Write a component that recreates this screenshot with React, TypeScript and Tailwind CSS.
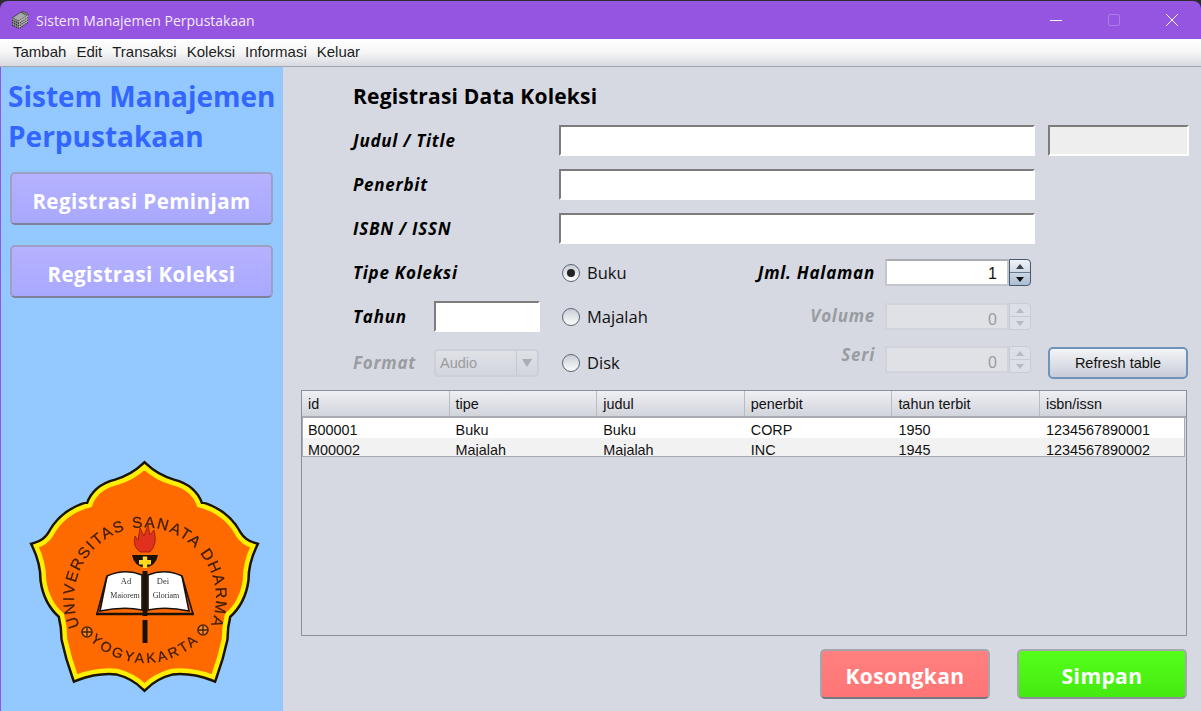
import React from "react";

const LOBE =
  "M124.5 17 Q113 28 96 33 Q76 38 70 55 Q43 62 31 85 Q26 93 16 96 Q24 113 24 130 Q27 152 42 165 Q45 177 45 189 Q49 208 56 227 Q77 219 97 221 Q113 225 124.5 236 Q136 225 152 221 Q172 219 193 227 Q200 208 204 189 Q204 177 207 165 Q222 152 225 130 Q225 113 233 96 Q223 93 218 85 Q206 62 179 55 Q173 38 153 33 Q136 28 124.5 17 Z";

function Flower({ x, y }: { x: number; y: number }) {
  return (
    <g>
      <circle cx={x} cy={y} r="5" fill="#ff8a30" stroke="#4a2500" strokeWidth="1.6" />
      <path d={`M${x - 4} ${y} H${x + 4} M${x} ${y - 4} V${y + 4}`} stroke="#4a2500" strokeWidth="1.4" />
    </g>
  );
}

function Logo() {
  return (
    <svg width="250" height="250" viewBox="0 0 250 250" className="block blur-[0.4px]">
      <defs>
        <path id="arcTop" d="M58 172 A71 71 0 1 1 192 172" fill="none" />
        <path id="arcBottom" d="M60 178 A78 78 0 0 0 190 178" fill="none" />
      </defs>
      <path d={LOBE} fill="#ff6a00" stroke="#1a1400" strokeWidth="9.5" strokeLinejoin="miter" strokeMiterlimit="12" />
      <path d={LOBE} fill="#ff6a00" stroke="#fff000" strokeWidth="4.5" strokeLinejoin="miter" strokeMiterlimit="12" />
      <text fontFamily="'Liberation Sans', sans-serif" fontSize="15.5" fill="#3a1c00" stroke="#3a1c00" strokeWidth="0.25">
        <textPath href="#arcTop" startOffset="50%" textAnchor="middle" letterSpacing="1.7">
          UNIVERSITAS SANATA DHARMA
        </textPath>
      </text>
      <text fontFamily="'Liberation Sans', sans-serif" fontSize="14" fill="#3a1c00" stroke="#3a1c00" strokeWidth="0.25">
        <textPath href="#arcBottom" startOffset="50%" textAnchor="middle" letterSpacing="2.8">
          YOGYAKARTA
        </textPath>
      </text>
      <Flower x={67} y={182} />
      <Flower x={183} y={180} />
      <path d="M120 102 Q112 96 115 86 L118 90 L120 78 L124 86 L128 75 L130 85 L134 80 Q138 94 130 102 Z" fill="#e0301e" stroke="#8a2010" strokeWidth="0.8" />
      <path d="M112 105 H138 Q136 116 125 118 Q114 116 112 105 Z" fill="#1a1208" />
      <path d="M122.8 106.5 h4.4 v3.5 h3.8 v4.4 h-3.8 v3.6 h-4.4 v-3.6 h-3.8 v-4.4 h3.8 Z" fill="#ffd820" />
      <path d="M87 126 Q105 118 122 125 V160 Q104 156 80 161 Z" fill="#ffffff" stroke="#1a1208" strokeWidth="1.6" />
      <path d="M128 125 Q145 118 162 126 L169 161 Q146 156 128 160 Z" fill="#ffffff" stroke="#1a1208" strokeWidth="1.6" />
      <path d="M87 126 L77 164 H173 L162 126" fill="none" stroke="#1a1208" strokeWidth="1.6" />
      <path d="M76 164 H174" stroke="#1a1208" strokeWidth="2.4" />
      <path d="M125 121 V166 M125 170 V193" stroke="#1a1208" strokeWidth="5" />
      <g fontFamily="'Liberation Serif', serif" fill="#333333" textAnchor="middle">
        <text x="106" y="134" fontSize="8.5">Ad</text>
        <text x="143" y="134" fontSize="8.5">Dei</text>
        <text x="105" y="148" fontSize="8">Maiorem</text>
        <text x="146" y="148" fontSize="8">Gloriam</text>
      </g>
    </svg>
  );
}

function AppIcon() {
  return (
    <svg width="20" height="20" viewBox="0 0 20 20" className="block">
      <path d="M2 8 L11 2 L18 5 L9 11 Z" fill="#a8a8a8" stroke="#333" strokeWidth="0.8" />
      <path d="M12 1 L18 3.5 L18 6 L12 3 Z" fill="#888" stroke="#333" strokeWidth="0.6" />
      <path d="M2 8 L9 11 V19 L2 15 Z" fill="#8a8a8a" />
      <path d="M9 11 L18 5 V12 L9 19 Z" fill="#b8b8b8" />
      <g stroke="#222" strokeWidth="1.1" strokeDasharray="1.2 1" fill="none">
        <path d="M2 10 L9 13.5 L18 7.5" />
        <path d="M2 12.5 L9 16 L18 10" />
        <path d="M2 15 L9 18.5 L18 12.5" />
      </g>
    </svg>
  );
}

const label = "font-['Open_Sans',sans-serif] font-bold italic text-[17px] tracking-[0.75px] leading-[22px] text-black";
const labelDisabled = "font-['Open_Sans',sans-serif] font-bold italic text-[17px] tracking-[0.75px] leading-[22px] text-[#999ca1]";
const field = "h-[31px] bg-white border-2 border-t-[#7c7c7c] border-l-[#7c7c7c] border-r-white border-b-white";

function Radio({ on, text }: { on?: boolean; text: string }) {
  return (
    <div className="flex items-center w-[100px] ml-[3px]">
      <span className="w-[18px] h-[18px] rounded-full border border-[#5c6470] bg-gradient-to-b from-[#c8ced6] to-[#fdfdfe] flex items-center justify-center shrink-0">
        {on && <span className="w-[8px] h-[8px] rounded-full bg-[#222]" />}
      </span>
      <span className="ml-[7px] font-['Open_Sans',sans-serif] text-[16.5px] leading-[22px] text-[#111]">{text}</span>
    </div>
  );
}

function Spinner({ value, disabled }: { value: string; disabled?: boolean }) {
  return (
    <div className="flex w-[146px] h-[27px]">
      <div
        className={
          disabled
            ? "flex-1 border-2 border-[#d0d3da] bg-[#dfe1e7] text-right pr-[10px] text-[#9a9ca0] text-[16px] leading-[29px] font-['Liberation_Sans',sans-serif]"
            : "flex-1 border-2 border-[#c4c6cc] border-t-[#aaadb3] bg-white text-right pr-[10px] text-[#111] text-[16px] leading-[25px] font-['Liberation_Sans',sans-serif]"
        }
      >
        {value}
      </div>
      <div
        className={
          disabled
            ? "w-[22px] rounded-r-[4px] border border-[#c9ccd3] flex flex-col bg-[#dcdfe5]"
            : "w-[22px] rounded-r-[4px] border border-[#46586e] flex flex-col bg-gradient-to-b from-[#f1f3f6] to-[#a9bdd3]"
        }
      >
        <div className="flex-1 flex items-center justify-center">
          <span className={disabled ? "w-0 h-0 border-x-[4px] border-x-transparent border-b-[5px] border-b-[#b6bac1]" : "w-0 h-0 border-x-[4px] border-x-transparent border-b-[5px] border-b-[#39424e]"} />
        </div>
        <div className={disabled ? "h-px bg-[#c9ccd3]" : "h-px bg-[#6a7a8e]"} />
        <div className="flex-1 flex items-center justify-center">
          <span className={disabled ? "w-0 h-0 border-x-[4px] border-x-transparent border-t-[5px] border-t-[#b6bac1]" : "w-0 h-0 border-x-[4px] border-x-transparent border-t-[5px] border-t-[#111]"} />
        </div>
      </div>
    </div>
  );
}

const columns = ["id", "tipe", "judul", "penerbit", "tahun terbit", "isbn/issn"];
const rows = [
  ["B00001", "Buku", "Buku", "CORP", "1950", "1234567890001"],
  ["M00002", "Majalah", "Majalah", "INC", "1945", "1234567890002"],
];

function SideButton({ text }: { text: string }) {
  return (
    <button className="w-[263px] h-[53px] ml-[9px] pt-[6px] rounded-[5px] border-2 border-[#9da0c4] border-b-[#7e8197] bg-gradient-to-b from-[#b6b2ff] to-[#a8a8ff] text-white font-['Open_Sans',sans-serif] font-bold text-[20.5px] tracking-[0.45px]">
      {text}
    </button>
  );
}

export default function App() {
  return (
    <div className="w-[1201px] h-[711px] bg-[#2c2c33] pt-px overflow-hidden">
      <div className="w-full h-[710px] rounded-t-[8px] overflow-hidden flex flex-col bg-[#9555e0]">
        <div className="h-[38px] shrink-0 flex items-center pl-[10px] text-white">
          <AppIcon />
          <span className="ml-[6px] font-['Open_Sans',sans-serif] text-[14px] text-[#f3eafd]">Sistem Manajemen Perpustakaan</span>
          <div className="ml-auto flex items-center h-full">
            <svg width="14" height="14" viewBox="0 0 14 14" className="mr-[44px]"><path d="M1 7.5 H13" stroke="#fff" strokeWidth="1" /></svg>
            <svg width="14" height="14" viewBox="0 0 14 14" className="mr-[44px]"><rect x="1.5" y="1.5" width="11" height="11" rx="1.5" fill="none" stroke="#ab7ce8" strokeWidth="1" /></svg>
            <svg width="14" height="14" viewBox="0 0 14 14" className="mr-[22px]"><path d="M1 1 L13 13 M13 1 L1 13" stroke="#fff" strokeWidth="1" /></svg>
          </div>
        </div>
        <div className="h-[28px] shrink-0 flex items-center pl-[13px] gap-[10px] bg-gradient-to-b from-white via-[#f6f6f7] to-[#d7d9e0] border-b border-[#a3a6ae] font-['Liberation_Sans',sans-serif] text-[15px] text-[#1c1c1c]">
          {["Tambah", "Edit", "Transaksi", "Koleksi", "Informasi", "Keluar"].map((m) => (
            <span key={m}>{m}</span>
          ))}
        </div>
        <div className="flex-1 flex min-h-0 pl-px">
          <aside className="w-[282px] shrink-0 bg-[#94c9ff] flex flex-col">
            <h1 className="pl-[7px] pt-[9px] font-['Open_Sans',sans-serif] font-bold text-[28px] leading-[40px] text-[#3366ff] whitespace-nowrap">
              Sistem Manajemen
              <br />
              Perpustakaan
            </h1>
            <div className="mt-[16px] flex flex-col gap-[20px]">
              <SideButton text="Registrasi Peminjam" />
              <SideButton text="Registrasi Koleksi" />
            </div>
            <div className="mt-[152px] ml-[19px]">
              <Logo />
            </div>
          </aside>
          <main className="flex-1 bg-[#d6d9e2] flex flex-col">
            <div className="pl-[70px] pt-[14px]">
              <h2 className="font-['Open_Sans',sans-serif] font-bold text-[21px] tracking-[0.2px] leading-[30px] text-black whitespace-nowrap">Registrasi Data Koleksi</h2>
              <div className="mt-[14px] flex items-center h-[31px]">
                <span className={`${label} w-[206px]`}>Judul / Title</span>
                <div className={`${field} w-[476px]`} />
                <div className={`${field} w-[141px] ml-[13px] !bg-[#eeeeee]`} />
              </div>
              <div className="mt-[13px] flex items-center h-[31px]">
                <span className={`${label} w-[206px]`}>Penerbit</span>
                <div className={`${field} w-[476px]`} />
              </div>
              <div className="mt-[13px] flex items-center h-[31px]">
                <span className={`${label} w-[206px]`}>ISBN / ISSN</span>
                <div className={`${field} w-[476px]`} />
              </div>
              <div className="mt-[15px] flex items-center h-[27px]">
                <span className={`${label} w-[206px]`}>Tipe Koleksi</span>
                <Radio on text="Buku" />
                <span className={`${label} w-[213px] text-right`}>Jml. Halaman</span>
                <div className="ml-[10px]">
                  <Spinner value="1" />
                </div>
              </div>
              <div className="mt-[15px] flex items-center h-[31px]">
                <span className={`${label} w-[81px]`}>Tahun</span>
                <div className={`${field} w-[106px]`} />
                <span className="w-[19px]" />
                <Radio text="Majalah" />
                <span className={`${labelDisabled} w-[213px] text-right -mt-[2px]`}>Volume</span>
                <div className="ml-[10px]">
                  <Spinner value="0" disabled />
                </div>
              </div>
              <div className="mt-[15px] flex items-center h-[32px]">
                <span className={`${labelDisabled} w-[81px]`}>Format</span>
                <div className="w-[105px] h-[28px] rounded-[4px] border-2 border-[#ccd0d8] bg-gradient-to-b from-[#dfe1e7] to-[#d2d5dd] flex items-center">
                  <span className="flex-1 pl-[4px] pt-[2px] text-[14.5px] text-[#9a9ca0] font-['Liberation_Sans',sans-serif]">Audio</span>
                  <span className="w-[21px] h-full border-l border-[#c4c8d0] flex items-center justify-center">
                    <span className="w-0 h-0 border-x-[5px] border-x-transparent border-t-[8px] border-t-[#a9adb5]" />
                  </span>
                </div>
                <span className="w-[20px]" />
                <Radio text="Disk" />
                <span className={`${labelDisabled} w-[213px] text-right -mt-[16px]`}>Seri</span>
                <div className="ml-[10px] -mt-[7px]">
                  <Spinner value="0" disabled />
                </div>
                <button className="ml-[17px] w-[140px] h-[32px] pt-[2px] rounded-[5px] border-2 border-[#6f93b9] bg-gradient-to-b from-[#f4f5f8] to-[#c8ccd6] text-[14.5px] text-[#111] font-['Liberation_Sans',sans-serif]">
                  Refresh table
                </button>
              </div>
            </div>
            <div className="ml-[18px] mt-[11px] w-[886px] h-[246px] shrink-0 border border-[#8d8f98] flex flex-col font-['Liberation_Sans',sans-serif] text-[14.4px] text-[#111]">
              <div className="h-[27px] shrink-0 flex bg-gradient-to-b from-[#eff0f4] to-[#d2d4dc] border-b-2 border-[#a8aab1]">
                {columns.map((c, i) => (
                  <div key={c} className={i < 5 ? "w-[147.6px] pl-[6px] leading-[26px] border-r border-[#b9bbc3]" : "flex-1 pl-[6px] leading-[26px]"}>
                    {c}
                  </div>
                ))}
              </div>
              <div className="h-[39px] shrink-0 mr-px overflow-hidden border-x border-b border-[#a9abb2] bg-white">
                {rows.map((r, n) => (
                  <div key={r[0]} className={n === 1 ? "h-[20px] flex bg-[#f2f2f2]" : "h-[20px] flex bg-white"}>
                    {r.map((c, i) => (
                      <div key={i} className={i < 5 ? "w-[147.6px] pl-[5px] leading-[25px]" : "flex-1 pl-[5px] leading-[25px]"}>
                        {c}
                      </div>
                    ))}
                  </div>
                ))}
              </div>
            </div>
            <div className="mt-[13px] ml-[537px] flex gap-[27px]">
              <button className="w-[170px] h-[50px] pt-[5px] rounded-[5px] border-2 border-[#a6a4ac] border-b-[#77787f] bg-gradient-to-b from-[#ff8080] to-[#ff7575] text-white font-['Open_Sans',sans-serif] font-bold text-[21px] tracking-[0.4px]">
                Kosongkan
              </button>
              <button className="w-[170px] h-[50px] pt-[5px] rounded-[5px] border-2 border-[#a6a8ae] border-b-[#8f9198] bg-gradient-to-b from-[#55ff1a] to-[#44ea10] text-white font-['Open_Sans',sans-serif] font-bold text-[21px] tracking-[0.4px]">
                Simpan
              </button>
            </div>
          </main>
        </div>
      </div>
    </div>
  );
}
